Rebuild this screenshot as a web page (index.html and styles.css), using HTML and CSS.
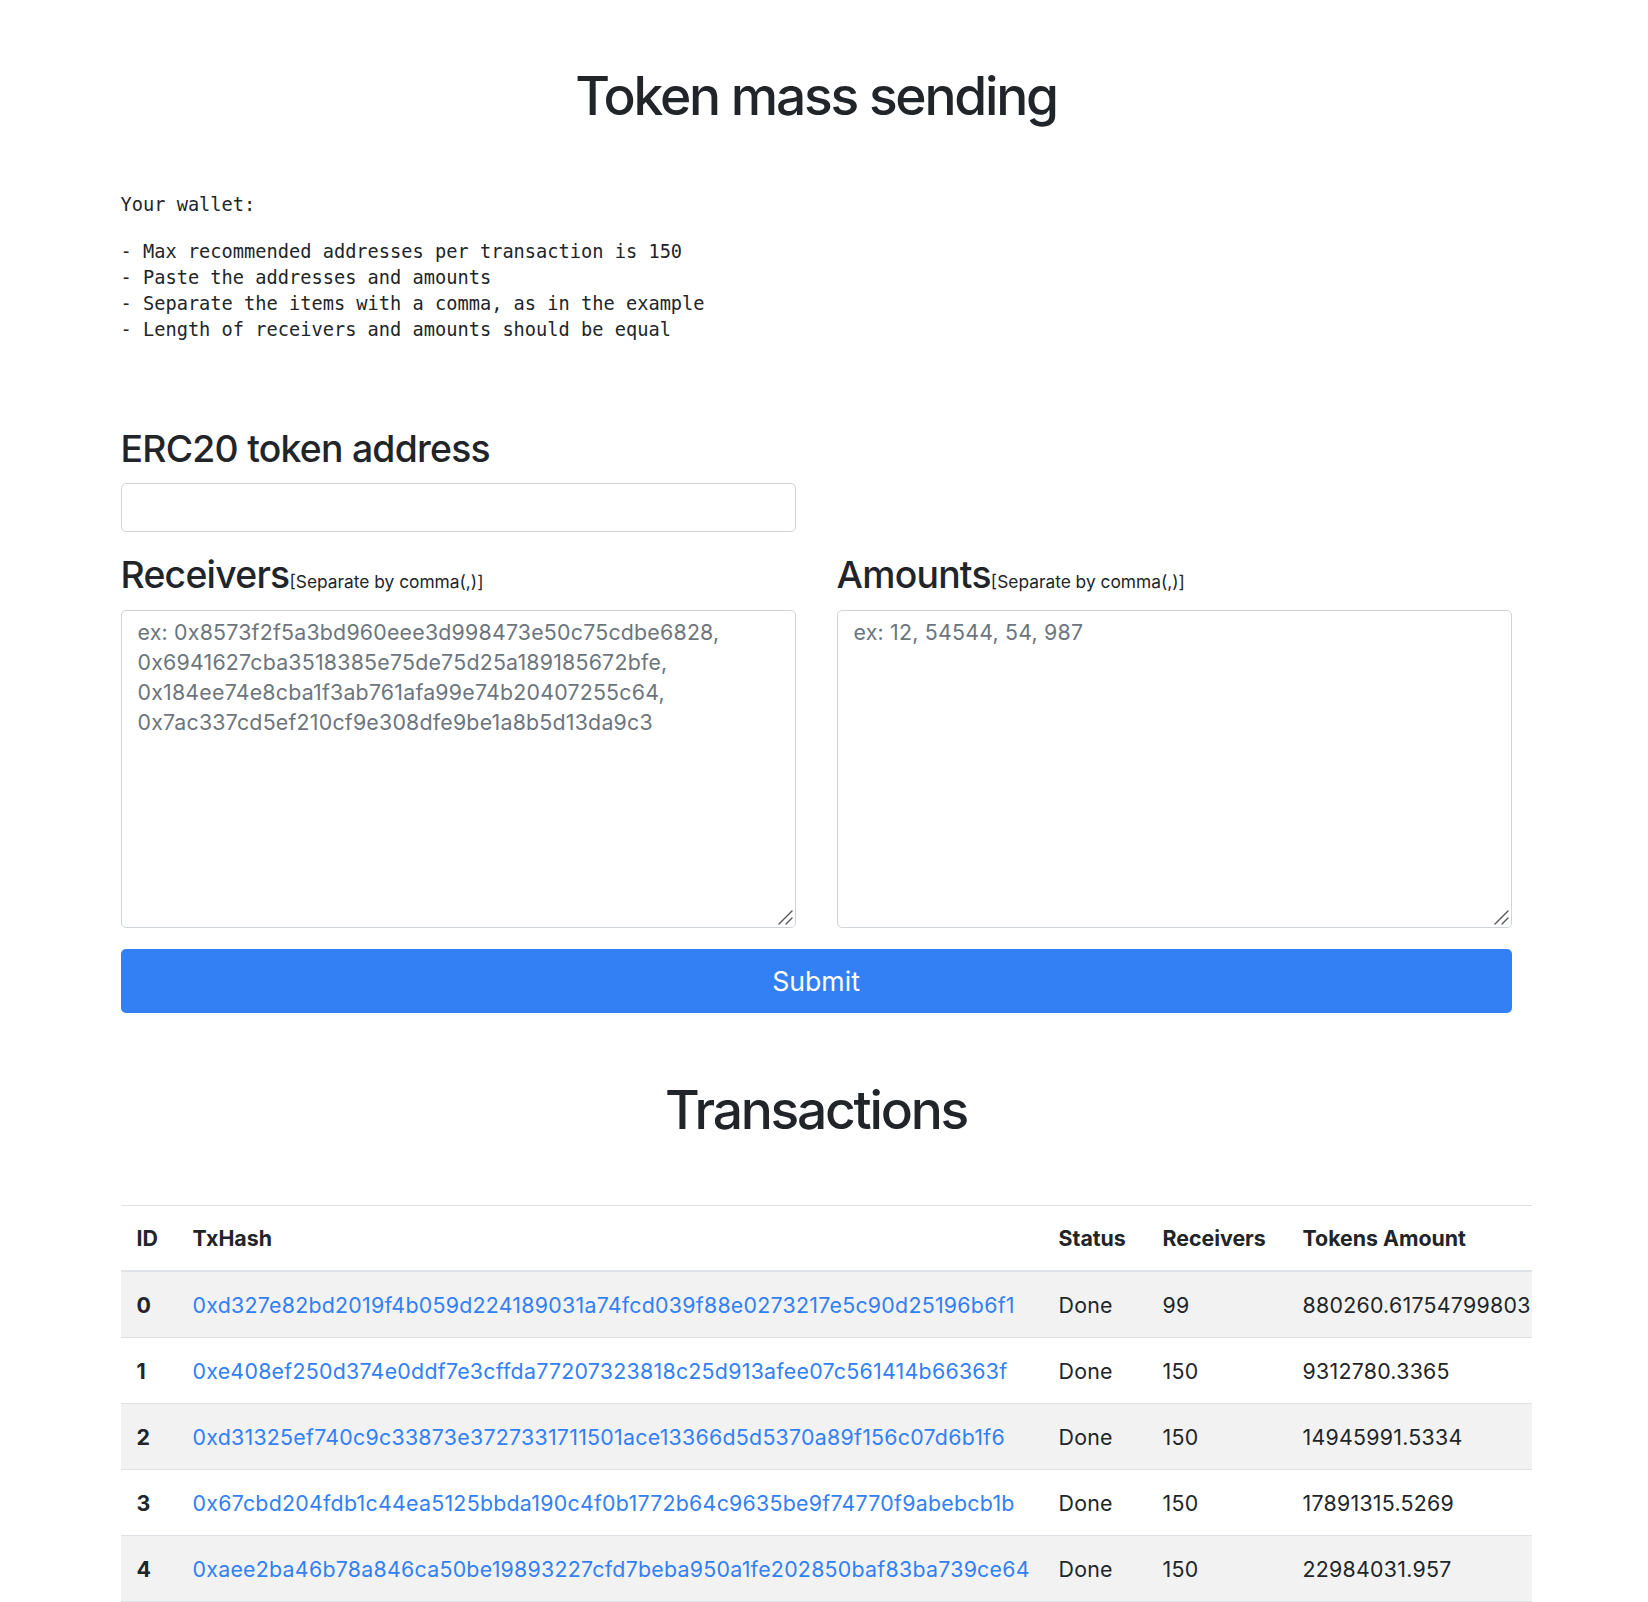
FILE: index.html
```html
<!DOCTYPE html>
<html lang="en">
<head>
<meta charset="utf-8">
<title>Token mass sending</title>
<link rel="stylesheet" href="styles.css">
</head>
<body>
<div class="page">
  <div class="container">
    <h1 class="title">Token mass sending</h1>
    <pre class="wallet">Your wallet: </pre>
    <pre class="rules">- Max recommended addresses per transaction is 150
- Paste the addresses and amounts
- Separate the items with a comma, as in the example
- Length of receivers and amounts should be equal</pre>

    <form class="form">
      <div class="row">
        <div class="col">
          <h3 class="label">ERC20 token address</h3>
          <input class="field input" type="text">
        </div>
        <div class="col"></div>
      </div>
      <div class="row">
        <div class="col">
          <h3 class="label">Receivers<small class="hint">[Separate by comma(,)]</small></h3>
          <div class="area-wrap">
            <textarea class="field area" placeholder="ex: 0x8573f2f5a3bd960eee3d998473e50c75cdbe6828,&#10;0x6941627cba3518385e75de75d25a189185672bfe,&#10;0x184ee74e8cba1f3ab761afa99e74b20407255c64,&#10;0x7ac337cd5ef210cf9e308dfe9be1a8b5d13da9c3"></textarea>
            <svg class="grip" width="16" height="16" viewBox="0 0 16 16" aria-hidden="true"><path d="M15 2 L2 15 M15 9 L9 15" stroke="#555" stroke-width="1.4" fill="none" stroke-linecap="round"/></svg>
          </div>
        </div>
        <div class="col">
          <h3 class="label">Amounts<small class="hint">[Separate by comma(,)]</small></h3>
          <div class="area-wrap">
            <textarea class="field area" placeholder="ex: 12, 54544, 54, 987"></textarea>
            <svg class="grip" width="16" height="16" viewBox="0 0 16 16" aria-hidden="true"><path d="M15 2 L2 15 M15 9 L9 15" stroke="#555" stroke-width="1.4" fill="none" stroke-linecap="round"/></svg>
          </div>
        </div>
      </div>
      <button class="submit" type="button">Submit</button>
    </form>

    <h1 class="title title-tx">Transactions</h1>

    <table class="tx">
      <colgroup>
        <col class="c-id"><col class="c-hash"><col class="c-status"><col class="c-recv"><col class="c-amount">
      </colgroup>
      <thead>
        <tr><th>ID</th><th>TxHash</th><th>Status</th><th>Receivers</th><th class="last">Tokens Amount</th></tr>
      </thead>
      <tbody>
        <tr class="odd"><th>0</th><td><a href="#">0xd327e82bd2019f4b059d224189031a74fcd039f88e0273217e5c90d25196b6f1</a></td><td>Done</td><td>99</td><td class="last">880260.61754799803</td></tr>
        <tr><th>1</th><td><a href="#">0xe408ef250d374e0ddf7e3cffda77207323818c25d913afee07c561414b66363f</a></td><td>Done</td><td>150</td><td class="last">9312780.3365</td></tr>
        <tr class="odd"><th>2</th><td><a href="#">0xd31325ef740c9c33873e3727331711501ace13366d5d5370a89f156c07d6b1f6</a></td><td>Done</td><td>150</td><td class="last">14945991.5334</td></tr>
        <tr><th>3</th><td><a href="#">0x67cbd204fdb1c44ea5125bbda190c4f0b1772b64c9635be9f74770f9abebcb1b</a></td><td>Done</td><td>150</td><td class="last">17891315.5269</td></tr>
        <tr class="odd"><th>4</th><td><a href="#">0xaee2ba46b78a846ca50be19893227cfd7beba950a1fe202850baf83ba739ce64</a></td><td>Done</td><td>150</td><td class="last">22984031.957</td></tr>
      </tbody>
    </table>
  </div>
</div>
</body>
</html>
```

FILE: styles.css
```css
* { box-sizing: border-box; }

html, body {
  margin: 0;
  padding: 0;
  background: #fff;
}

body {
  font-family: "Inter", "Liberation Sans", sans-serif;
  font-size: 21.33px;
  line-height: 1.5;
  color: #212529;
}

.page {
  width: 1632px;
}

.container {
  width: 1391px;
  margin: 0 auto;
}

.title {
  font-size: 53.33px;
  font-weight: 500;
  line-height: 1.2;
  text-align: center;
  margin: 64px 0 64px;
  letter-spacing: -0.042em;
}

.title-tx {
  margin: 65px 0 63px;
}

.wallet,
.rules {
  font-family: "DejaVu Sans Mono", "Liberation Mono", monospace;
  font-size: 18.67px;
  line-height: 26px;
  margin: 0 0 21px;
  color: #212529;
}

.form {
  margin-top: 84px;
}

.row {
  display: flex;
  gap: 41px;
  margin-bottom: 21px;
}

.col {
  flex: 1 1 0;
  min-width: 0;
}

.label {
  font-size: 37.33px;
  font-weight: 500;
  line-height: 1.2;
  margin: 0 0 11.5px;
  letter-spacing: -0.02em;
}

.hint {
  font-size: 17.33px;
  font-weight: 400;
  letter-spacing: 0;
}

.field {
  display: block;
  width: 100%;
  font-family: "Inter", "Liberation Sans", sans-serif;
  font-size: 21.33px;
  line-height: 30px;
  letter-spacing: 0.22px;
  color: #495057;
  background: #fff;
  border: 1.33px solid #ced4da;
  border-radius: 5px;
  padding: 8px 16px;
  outline: none;
}

.input {
  height: 49px;
}

.area-wrap {
  position: relative;
}

.area {
  height: 318.5px;
  padding-top: 6px;
  resize: none;
}

.grip {
  position: absolute;
  right: 3px;
  bottom: 3px;
  pointer-events: none;
}

.field::placeholder {
  color: #6c757d;
  opacity: 1;
}

.submit {
  display: block;
  width: 100%;
  height: 64px;
  font-family: "Inter", "Liberation Sans", sans-serif;
  font-size: 26.67px;
  line-height: 1.5;
  color: #fff;
  background: #3380f5;
  border: 0;
  border-radius: 5px;
  cursor: pointer;
}

.tx {
  width: 1411px;
  table-layout: fixed;
  border-collapse: separate;
  border-spacing: 0;
  margin: 0;
}

.c-id { width: 56px; }
.c-hash { width: 866px; }
.c-status { width: 104px; }
.c-recv { width: 140px; }
.c-amount { width: 245px; }

.tx th,
.tx td {
  text-align: left;
  vertical-align: top;
  padding: 16.5px 16px;
  line-height: 32px;
  white-space: nowrap;
  border-bottom: 1px solid #dee2e6;
}

.tx th { font-weight: 700; }

.tx td {
  font-weight: 400;
  letter-spacing: 0.27px;
}

.tx thead th {
  border-top: 1px solid #dee2e6;
  border-bottom: 2px solid #dee2e6;
  padding: 16px 16px;
}

.tx .last { padding-right: 0; overflow: visible; }

.tx tr.odd th,
.tx tr.odd td {
  background: #f2f2f2;
}

.tx a {
  color: #3180f4;
  text-decoration: none;
}
```
